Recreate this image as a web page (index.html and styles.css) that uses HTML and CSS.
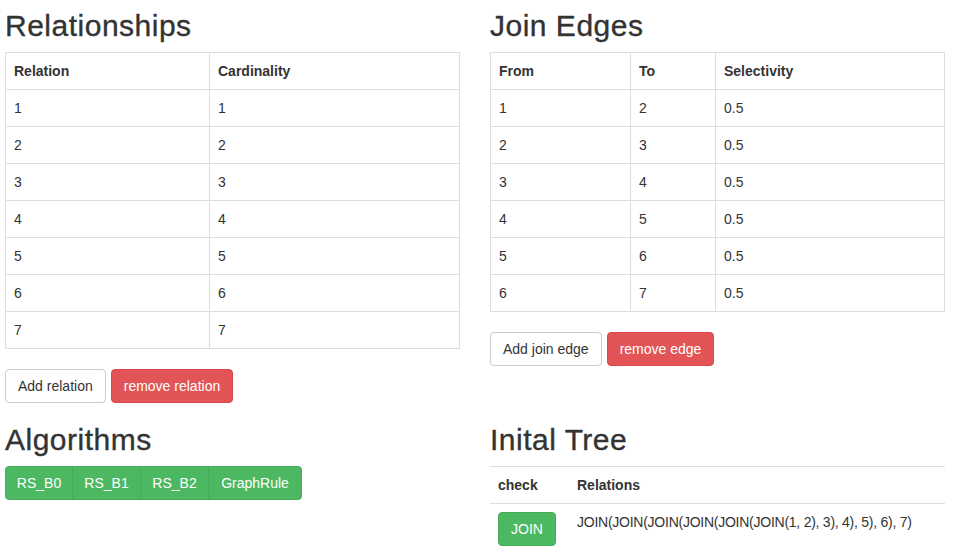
FILE: index.html
```html
<!DOCTYPE html>
<html>
<head>
<meta charset="utf-8">
<link rel="stylesheet" href="styles.css">
</head>
<body>
<div class="page">
  <div class="row first">
    <div class="col">
      <h2>Relationships</h2>
      <table class="table bordered rel">
        <thead><tr><th class="c1">Relation</th><th>Cardinality</th></tr></thead>
        <tbody>
          <tr><td>1</td><td>1</td></tr>
          <tr><td>2</td><td>2</td></tr>
          <tr><td>3</td><td>3</td></tr>
          <tr><td>4</td><td>4</td></tr>
          <tr><td>5</td><td>5</td></tr>
          <tr><td>6</td><td>6</td></tr>
          <tr><td>7</td><td>7</td></tr>
        </tbody>
      </table>
      <div class="btns">
        <button class="btn btn-default">Add relation</button>
        <button class="btn btn-danger">remove relation</button>
      </div>
    </div>
    <div class="col">
      <h2>Join Edges</h2>
      <table class="table bordered edges">
        <thead><tr><th class="e1">From</th><th class="e2">To</th><th>Selectivity</th></tr></thead>
        <tbody>
          <tr><td>1</td><td>2</td><td>0.5</td></tr>
          <tr><td>2</td><td>3</td><td>0.5</td></tr>
          <tr><td>3</td><td>4</td><td>0.5</td></tr>
          <tr><td>4</td><td>5</td><td>0.5</td></tr>
          <tr><td>5</td><td>6</td><td>0.5</td></tr>
          <tr><td>6</td><td>7</td><td>0.5</td></tr>
        </tbody>
      </table>
      <div class="btns">
        <button class="btn btn-default">Add join edge</button>
        <button class="btn btn-danger">remove edge</button>
      </div>
    </div>
  </div>
  <div class="row second">
    <div class="col">
      <h2>Algorithms</h2>
      <div class="btn-group">
        <button class="btn btn-success">RS_B0</button><button class="btn btn-success">RS_B1</button><button class="btn btn-success">RS_B2</button><button class="btn btn-success">GraphRule</button>
      </div>
    </div>
    <div class="col">
      <h2>Inital Tree</h2>
      <table class="table tree">
        <thead><tr><th class="t1">check</th><th>Relations</th></tr></thead>
        <tbody>
          <tr><td><button class="btn btn-success">JOIN</button></td><td class="expr">JOIN(JOIN(JOIN(JOIN(JOIN(JOIN(1, 2), 3), 4), 5), 6), 7)</td></tr>
        </tbody>
      </table>
    </div>
  </div>
</div>
</body>
</html>
```
FILE: styles.css
```css
* { box-sizing: border-box; }
html, body { margin: 0; padding: 0; background: #fff; }
body {
  font-family: "Liberation Sans", Arial, sans-serif;
  font-size: 14px;
  line-height: 20px;
  color: #333;
}
.page { padding: 9px 14px 0 5px; }
.row { display: flex; gap: 30px; }
.col { flex: 1 1 0; min-width: 0; }
h2 {
  font-size: 30px;
  font-weight: 500;
  line-height: 33px;
  margin: 0 0 10px;
  color: #333;
  letter-spacing: 0.5px;
  -webkit-text-stroke: 0.35px #333;
}
.second h2 { margin-top: 20px; }
.table {
  width: 100%;
  border-collapse: collapse;
  margin-bottom: 20px;
}
.table th, .table td {
  padding: 8px;
  text-align: left;
  vertical-align: top;
  border-top: 1px solid #ddd;
  line-height: 20px;
}
.table th { font-weight: bold; }
.bordered, .bordered th, .bordered td { border: 1px solid #ddd; }
.rel .c1 { width: 204px; }
.edges .e1 { width: 140px; }
.edges .e2 { width: 85px; }
.tree .t1 { width: 79px; }
.tree .expr { letter-spacing: -0.25px; }
.btns { display: flex; gap: 5px; }
.btn {
  font-family: "Liberation Sans", Arial, sans-serif;
  font-size: 14px;
  line-height: 20px;
  padding: 6px 12px;
  border: 1px solid transparent;
  border-radius: 4px;
  cursor: pointer;
  margin: 0;
}
.btn-default { background: #fff; color: #333; border-color: #ccc; }
.btn-danger { background: #e25455; color: #fff; border-color: #d9474a; }
.btn-success { background: #4cb862; color: #fff; border-color: #44ab58; }
.btn-group { display: inline-flex; }
.btn-group .btn { border-radius: 0; width: 68px; padding-left: 0; padding-right: 0; }
.btn-group .btn + .btn { margin-left: -1px; width: 69px; }
.btn-group .btn:first-child { border-radius: 4px 0 0 4px; }
.btn-group .btn:last-child { border-radius: 0 4px 4px 0; width: 94px; }
```
